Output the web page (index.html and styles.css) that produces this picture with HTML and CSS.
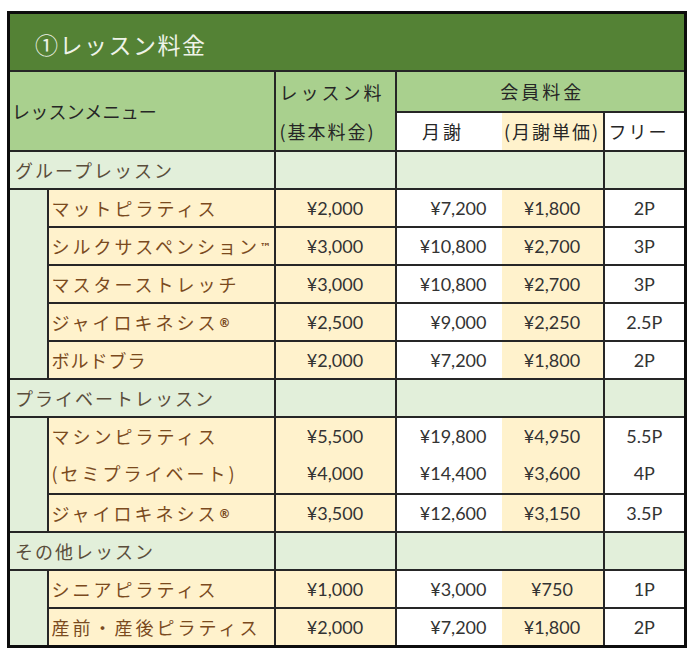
FILE: index.html
```html
<!DOCTYPE html>
<html lang="ja">
<head>
<meta charset="utf-8">
<title>レッスン料金</title>
<link rel="stylesheet" href="styles.css">
</head>
<body>
<div class="wrap">
<table class="price">
  <colgroup>
    <col class="c-ind"><col class="c-menu"><col class="c-base"><col class="c-mon"><col class="c-unit"><col class="c-free">
  </colgroup>
  <thead>
    <tr class="title"><th colspan="6">①レッスン料金</th></tr>
    <tr class="h1">
      <th colspan="2" rowspan="2" class="h-menu">レッスンメニュー</th>
      <th rowspan="2" class="h-base"><div class="l1">レッスン料</div><div class="l2">(基本料金)</div></th>
      <th colspan="3" class="h-member">会員料金</th>
    </tr>
    <tr class="h2">
      <th class="h-mon">月謝</th>
      <th class="h-unit">(月謝単価)</th>
      <th class="h-free">フリー</th>
    </tr>
  </thead>
  <tbody>
    <tr class="cat"><td colspan="2" class="cat-name">グループレッスン</td><td></td><td colspan="2"></td><td></td></tr>
    <tr class="item"><td rowspan="5" class="ind"></td><td class="menu">マットピラティス</td><td class="base">¥2,000</td><td class="mon">¥7,200</td><td class="unit">¥1,800</td><td class="free">2P</td></tr>
    <tr class="item"><td class="menu">シルクサスペンション<span class="mark tm">™</span></td><td class="base">¥3,000</td><td class="mon">¥10,800</td><td class="unit">¥2,700</td><td class="free">3P</td></tr>
    <tr class="item"><td class="menu">マスターストレッチ</td><td class="base">¥3,000</td><td class="mon">¥10,800</td><td class="unit">¥2,700</td><td class="free">3P</td></tr>
    <tr class="item"><td class="menu">ジャイロキネシス<span class="mark">®</span></td><td class="base">¥2,500</td><td class="mon">¥9,000</td><td class="unit">¥2,250</td><td class="free">2.5P</td></tr>
    <tr class="item"><td class="menu narrow">ボルドブラ</td><td class="base">¥2,000</td><td class="mon">¥7,200</td><td class="unit">¥1,800</td><td class="free">2P</td></tr>

    <tr class="cat"><td colspan="2" class="cat-name">プライベートレッスン</td><td></td><td colspan="2"></td><td></td></tr>
    <tr class="item double">
      <td rowspan="2" class="ind"></td>
      <td class="menu"><div class="ln">マシンピラティス</div><div class="ln">(セミプライベート)</div></td>
      <td class="base"><div class="ln">¥5,500</div><div class="ln">¥4,000</div></td>
      <td class="mon"><div class="ln">¥19,800</div><div class="ln">¥14,400</div></td>
      <td class="unit"><div class="ln">¥4,950</div><div class="ln">¥3,600</div></td>
      <td class="free"><div class="ln">5.5P</div><div class="ln">4P</div></td>
    </tr>
    <tr class="item"><td class="menu">ジャイロキネシス<span class="mark">®</span></td><td class="base">¥3,500</td><td class="mon">¥12,600</td><td class="unit">¥3,150</td><td class="free">3.5P</td></tr>

    <tr class="cat"><td colspan="2" class="cat-name">その他レッスン</td><td></td><td colspan="2"></td><td></td></tr>
    <tr class="item"><td rowspan="2" class="ind"></td><td class="menu">シニアピラティス</td><td class="base">¥1,000</td><td class="mon">¥3,000</td><td class="unit">¥750</td><td class="free">1P</td></tr>
    <tr class="item"><td class="menu">産前・産後ピラティス</td><td class="base">¥2,000</td><td class="mon">¥7,200</td><td class="unit">¥1,800</td><td class="free">2P</td></tr>
  </tbody>
</table>
</div>
</body>
</html>
```
FILE: styles.css
```css
html, body {
  margin: 0;
  padding: 0;
  background: #ffffff;
}

body {
  font-family: "Noto Sans CJK JP", "Noto Sans", sans-serif;
}

.wrap {
  padding: 11px 0 0 7px;
}

.price {
  border-collapse: collapse;
  table-layout: fixed;
  width: 677px;
  border: 3px solid #0d0d0d;
}

.c-ind { width: 39px; }
.c-menu { width: 227px; }
.c-base { width: 121px; }
.c-mon { width: 106px; }
.c-unit { width: 102px; }
.c-free { width: 82px; }

.price th,
.price td {
  border: 2px solid #262626;
  padding: 0;
  font-weight: 400;
  line-height: 1;
  vertical-align: middle;
  white-space: nowrap;
  overflow: hidden;
}

/* title */
.title th {
  height: 58px;
  background: #548235;
  color: #eef3e8;
  font-size: 23px;
  letter-spacing: 1.5px;
  text-align: left;
  padding: 6px 0 0 25px;
  box-sizing: border-box;
}

/* header */
.h1 th,
.h2 th {
  color: #262626;
  font-size: 18px;
}

.h1 th {
  height: 39px;
}

.h2 th {
  height: 37px;
}

.h-menu {
  background: #a9d08e;
  text-align: left;
  padding-left: 2px !important;
  letter-spacing: 0.2px;
}

.h-base {
  background: #a9d08e;
  text-align: left;
  padding-left: 4px !important;
  letter-spacing: 3px;
}

.h-base .l1 {
  height: 40px;
  line-height: 40px;
}

.h-base .l2 {
  height: 38px;
  line-height: 38px;
  letter-spacing: 2px;
}

.h-member {
  background: #a9d08e;
  text-align: center;
  letter-spacing: 3px;
  padding-left: 4px !important;
}

.h-mon {
  background: #ffffff;
  text-align: center;
  letter-spacing: 3px;
  padding-right: 12px !important;
  border-right: none !important;
}

.h-unit {
  background: #fff2cc;
  text-align: center;
  letter-spacing: 2px;
  border-left: none !important;
}

.h-free {
  background: #ffffff;
  text-align: left;
  padding-left: 4px !important;
  letter-spacing: 2px;
}

/* category rows */
.cat td {
  height: 36px;
  background: #e2efda;
}

.cat-name {
  color: #5a4d3b;
  font-size: 18px;
  letter-spacing: 2px;
  padding-left: 5px !important;
}

/* item rows */
.item td {
  height: 36px;
}

.ind {
  background: #e2efda;
}

.menu {
  background: #fff2cc;
  color: #7a4a1e;
  font-size: 18px;
  letter-spacing: 3px;
  padding-left: 3px !important;
}

.menu.narrow {
  letter-spacing: 1px;
}

.mark {
  font-family: "DejaVu Sans", sans-serif;
  font-size: 12px;
  font-weight: 700;
  letter-spacing: 0;
  vertical-align: 3px;
}

.mark.tm {
  font-size: 11px;
}

.base,
.mon,
.unit,
.free {
  font-family: "Lato", "Open Sans", sans-serif;
  font-size: 18px;
  color: #333333;
}

.base {
  background: #fff2cc;
  text-align: center;
}

.mon {
  background: #ffffff;
  text-align: right;
  padding-right: 15px !important;
  border-right: none !important;
}

.unit {
  background: #fff2cc;
  text-align: center;
  border-left: none !important;
}

.free {
  background: #ffffff;
  text-align: center;
}

.double td {
  height: 75px;
}

.ln {
  height: 37px;
  line-height: 37px;
}
```
